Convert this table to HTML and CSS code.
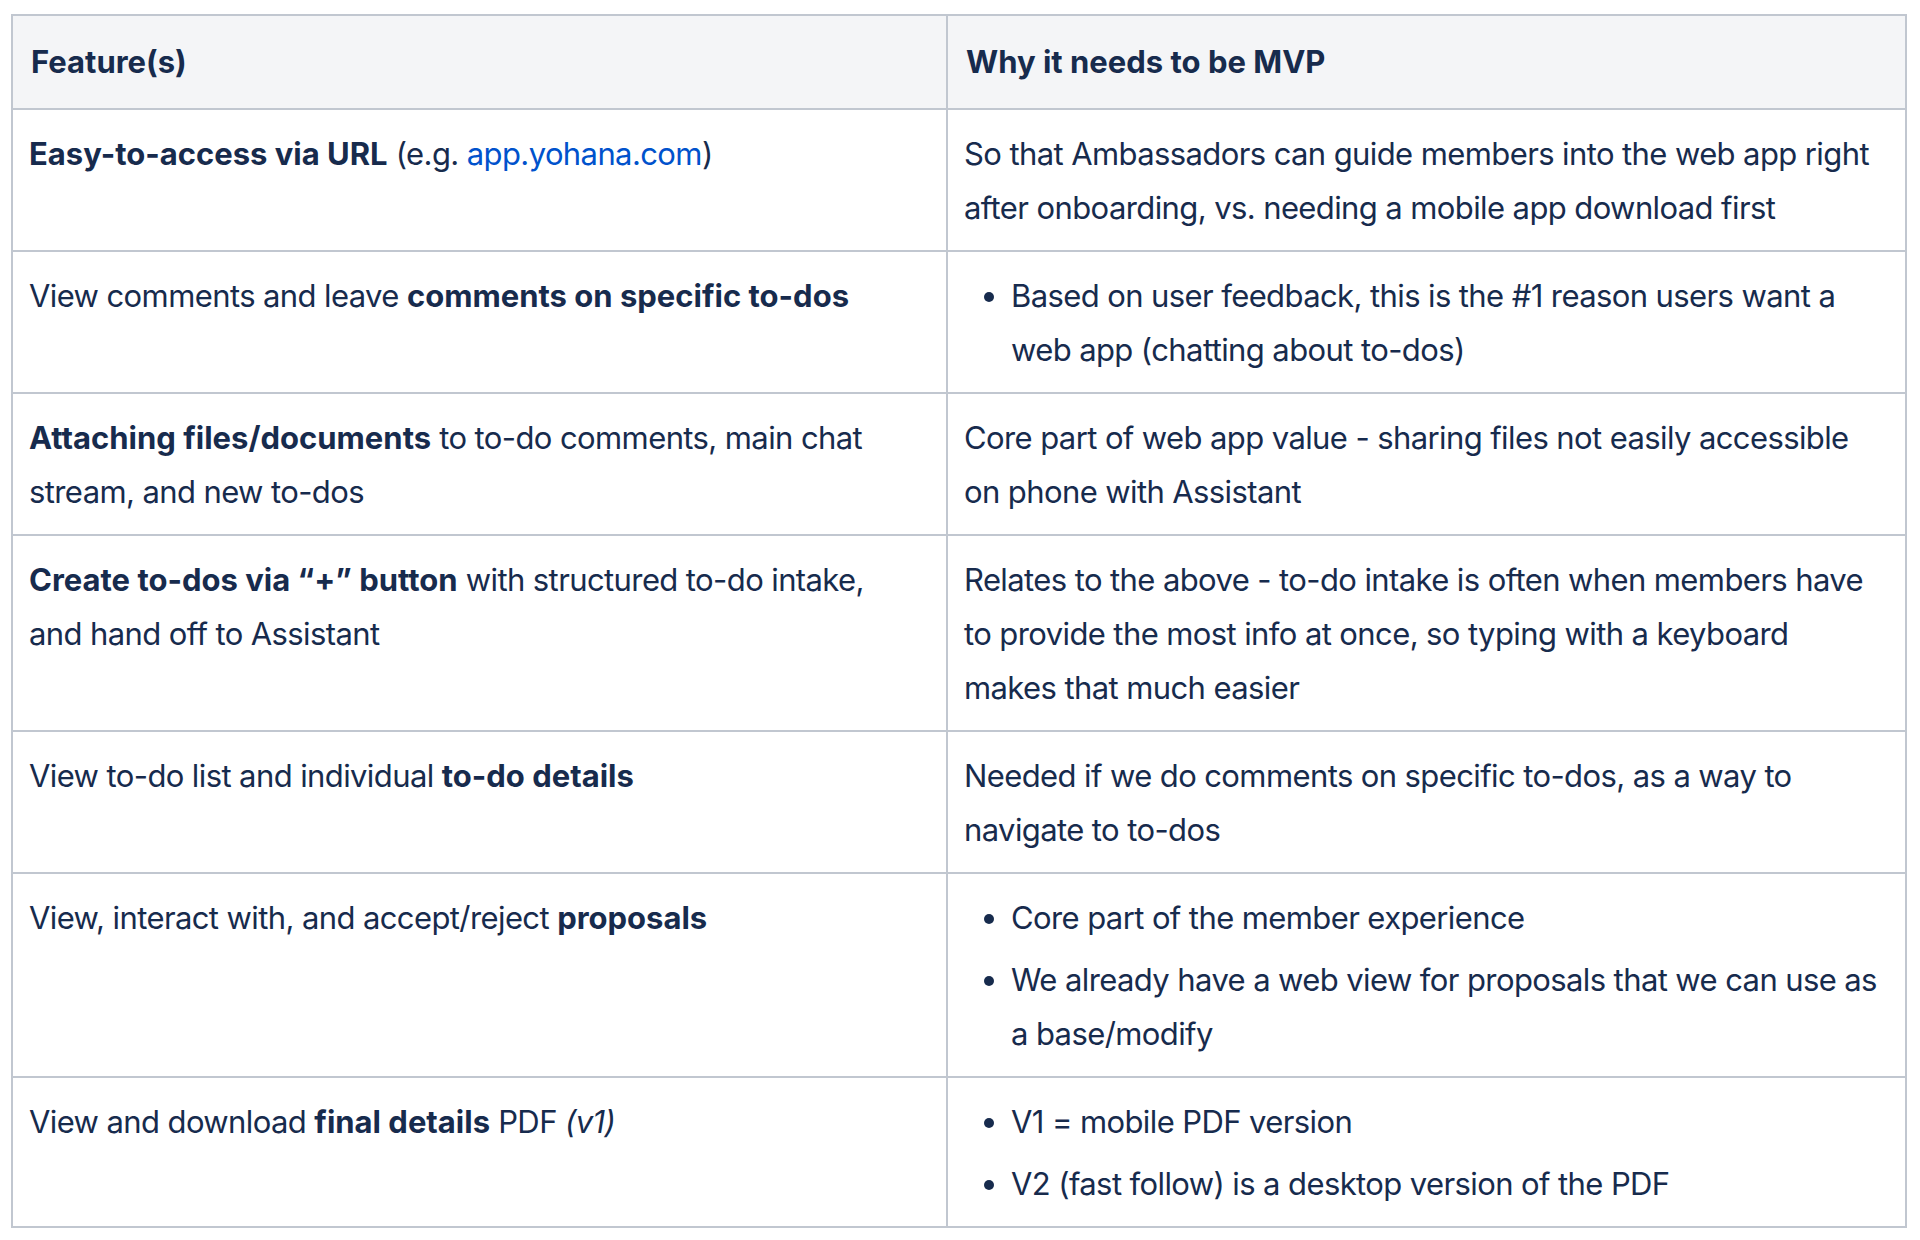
FILE: index.html
```html
<!DOCTYPE html>
<html lang="en">
<head>
<meta charset="utf-8">
<title>MVP features</title>
<link rel="stylesheet" href="styles.css">
</head>
<body>
<table class="mvp">
  <colgroup>
    <col class="col-feature">
    <col class="col-why">
  </colgroup>
  <thead>
    <tr>
      <th>Feature(s)</th>
      <th>Why it needs to be MVP</th>
    </tr>
  </thead>
  <tbody>
    <tr>
      <td><strong>Easy-to-access via URL</strong> (e.g. <a href="#">app.yohana.com</a>)</td>
      <td>So that Ambassadors can guide members into the web app right after onboarding, vs. needing a mobile app download first</td>
    </tr>
    <tr>
      <td>View comments and leave <strong>comments on specific to-dos</strong></td>
      <td>
        <ul>
          <li>Based on user feedback, this is the #1 reason users want a web app (chatting about to-dos)</li>
        </ul>
      </td>
    </tr>
    <tr>
      <td><strong>Attaching files/documents</strong> to to-do comments, main chat stream, and new to-dos</td>
      <td>Core part of web app value - sharing files not easily accessible on phone with Assistant</td>
    </tr>
    <tr>
      <td><strong>Create to-dos via “+” button</strong> with structured to-do intake, and hand off to Assistant</td>
      <td>Relates to the above - to-do intake is often when members have to provide the most info at once, so typing with a keyboard makes that much easier</td>
    </tr>
    <tr>
      <td>View to-do list and individual <strong>to-do details</strong></td>
      <td>Needed if we do comments on specific to-dos, as a way to navigate to to-dos</td>
    </tr>
    <tr>
      <td>View, interact with, and accept/reject <strong>proposals</strong></td>
      <td>
        <ul>
          <li>Core part of the member experience</li>
          <li>We already have a web view for proposals that we can use as a base/modify</li>
        </ul>
      </td>
    </tr>
    <tr>
      <td>View and download <strong>final details</strong> PDF <em>(v1)</em></td>
      <td>
        <ul>
          <li>V1 = mobile PDF version</li>
          <li>V2 (fast follow) is a desktop version of the PDF</li>
        </ul>
      </td>
    </tr>
  </tbody>
</table>
</body>
</html>
```

FILE: styles.css
```css
html, body {
  margin: 0;
  padding: 0;
  background: #ffffff;
}

body {
  font-family: Inter, "Noto Sans", "Liberation Sans", sans-serif;
  font-size: 31px;
  line-height: 54px;
  letter-spacing: -0.6px;
  color: #172b4d;
}

.mvp {
  margin: 14px 0 0 11px;
  width: 1896px;
  table-layout: fixed;
  border-collapse: separate;
  border-spacing: 0;
  border-top: 2px solid #c1c7d0;
  border-left: 2px solid #c1c7d0;
}

.col-feature { width: 935px; }
.col-why { width: 959px; }

.mvp th,
.mvp td {
  box-sizing: border-box;
  border-right: 2px solid #c1c7d0;
  border-bottom: 2px solid #c1c7d0;
  padding: 17px 26px 15px 16px;
  text-align: left;
  vertical-align: top;
}

.mvp th {
  background: #f4f5f7;
  font-weight: 700;
  letter-spacing: 0;
  padding: 19px 18px 19px 18px;
}

.mvp strong {
  font-weight: 700;
  letter-spacing: 0;
}

.mvp em {
  font-style: italic;
}

.mvp a {
  color: #0052cc;
  text-decoration: none;
}

.mvp ul {
  margin: 0;
  padding: 0 0 0 47px;
}

.mvp li + li {
  margin-top: 8px;
}
```
